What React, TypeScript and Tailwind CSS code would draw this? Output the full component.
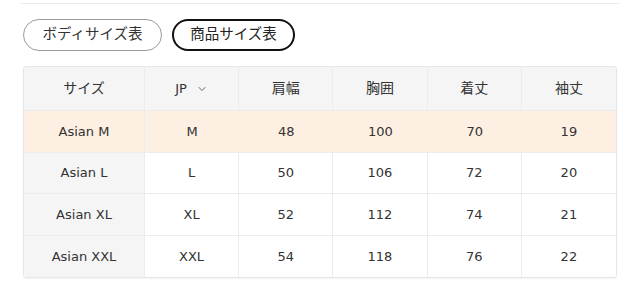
import React from "react";
import { ChevronDown } from "lucide-react";

const headers = ["肩幅", "胸囲", "着丈", "袖丈"];

const rows = [
  { name: "Asian M", jp: "M", vals: [48, 100, 70, 19], active: true },
  { name: "Asian L", jp: "L", vals: [50, 106, 72, 20], active: false },
  { name: "Asian XL", jp: "XL", vals: [52, 112, 74, 21], active: false },
  { name: "Asian XXL", jp: "XXL", vals: [54, 118, 76, 22], active: false },
];

const App = () => {
  return (
    <div
      className="w-[640px] h-[294px] bg-white text-[#333]"
      style={{ fontFamily: '"DejaVu Sans", "Noto Sans CJK JP", sans-serif' }}
    >
      <div className="mx-[20px] pt-[3px]">
        <div className="h-px bg-[#ebebeb]" />
      </div>

      {/* tabs */}
      <div className="flex gap-[10px] px-[23px] mt-[15px]">
        <button className="h-[32px] w-[139px] rounded-full border border-[#9a9a9a] text-[14.5px] text-[#333] flex items-center justify-center">
          ボディサイズ表
        </button>
        <button className="h-[32px] w-[123px] rounded-full border-2 border-[#111] text-[14.5px] text-[#222] flex items-center justify-center">
          商品サイズ表
        </button>
      </div>

      {/* size table */}
      <div className="mx-[23px] mt-[15px] w-[594px] border border-[#e6e6e6] rounded-[3px] shadow-[0_1px_2px_rgba(0,0,0,0.06)] overflow-hidden text-[13px]">
        <div className="grid grid-cols-[121px_repeat(5,1fr)] h-[44px] bg-[#f5f5f5] border-b border-[#ececec] text-[14px]">
          <div className="flex items-center justify-center border-r border-[#ececec]">サイズ</div>
          <div className="flex items-center justify-center gap-[9px] border-r border-[#ececec] text-[13px]">
            <span>JP</span>
            <ChevronDown size={12} strokeWidth={1.8} className="text-[#555] mt-[1px]" />
          </div>
          {headers.map((h, i) => (
            <div
              key={h}
              className={
                i < headers.length - 1
                  ? "flex items-center justify-center border-r border-[#ececec]"
                  : "flex items-center justify-center"
              }
            >
              {h}
            </div>
          ))}
        </div>
        {rows.map((r, idx) => (
          <div
            key={r.name}
            className={
              (r.active ? "bg-[#fdefe2] " : "bg-white ") +
              (idx % 2 === 0 ? "h-[42px] " : "h-[41px] ") +
              (idx < rows.length - 1 ? "border-b border-[#ececec] " : "") +
              "grid grid-cols-[121px_repeat(5,1fr)]"
            }
          >
            <div
              className={
                (r.active ? "" : "bg-[#f5f5f5] ") +
                "flex items-center justify-center border-r border-[#ececec]"
              }
            >
              {r.name}
            </div>
            <div className={(r.active ? "" : "border-r border-[#ececec] ") + "flex items-center justify-center"}>
              {r.jp}
            </div>
            {r.vals.map((v, i) => (
              <div
                key={i}
                className={
                  (!r.active && i < r.vals.length - 1 ? "border-r border-[#ececec] " : "") +
                  "flex items-center justify-center"
                }
              >
                {v}
              </div>
            ))}
          </div>
        ))}
      </div>
    </div>
  );
};

export default App;
